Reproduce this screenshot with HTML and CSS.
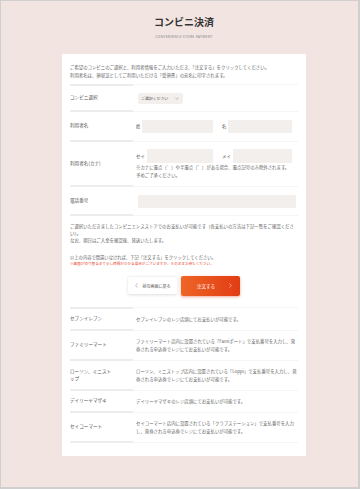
FILE: index.html
```html
<!DOCTYPE html>
<html lang="ja">
<head>
    <meta charset="UTF-8">
    <meta name="viewport" content="width=device-width, initial-scale=1.0">
    <title>コンビニ決済</title>
    <link rel="stylesheet" href="styles.css">
</head>
<body>

<div class="page">
    <div class="page-head">
        <h1 class="page-title">コンビニ決済</h1>
        <p class="page-sub">CONVENIENCE STORE PAYMENT</p>
    </div>

    <div class="card">
        <p class="intro">ご希望のコンビニのご選択と、利用者情報をご入力いただき、「注文する」をクリックしてください。<br>利用者名は、領収証としてご利用いただける「受領書」の宛名に印字されます。</p>

        <table class="form-table">
            <tr class="row-select">
                <th>コンビニ選択</th>
                <td>
                    <div class="select">ご選択ください
                        <svg class="select-chev" viewBox="0 0 4 3" width="4" height="3"><polyline points="0.4,0.6 2,2.3 3.6,0.6" fill="none" stroke="#888" stroke-width="0.5"/></svg>
                    </div>
                </td>
            </tr>
            <tr>
                <th>利用者名</th>
                <td>
                    <div class="name-pair">
                        <label class="name-field"><span>姓</span><input type="text"></label>
                        <label class="name-field"><span>名</span><input type="text"></label>
                    </div>
                </td>
            </tr>
            <tr class="row-kana">
                <th>利用者名(カナ)</th>
                <td>
                    <div class="name-pair">
                        <label class="name-field"><span>セイ</span><input type="text" class="kana"></label>
                        <label class="name-field"><span>メイ</span><input type="text" class="kana"></label>
                    </div>
                    <p class="note">※カナに濁点（゛）や半濁点（゜）がある場合、濁点記号のみ除外されます。予めご了承ください。</p>
                </td>
            </tr>
            <tr class="row-tel">
                <th>電話番号</th>
                <td><input type="text" class="tel"></td>
            </tr>
        </table>

        <p class="info">ご選択いただきましたコンビニエンスストアでのお支払いが可能です（各支払いの方法は下記一覧をご確認ください）。<br>なお、期日はご入金を確認後、発送いたします。</p>

        <p class="confirm">以上の内容で間違いなければ、下記「注文する」をクリックしてください。</p>
        <p class="warn">※画面が切り替るまで少し時間がかかる場合がございますが、そのままお待ちください。</p>

        <div class="actions">
            <a href="#" class="back-btn">
                <svg viewBox="0 0 3 5" width="3" height="5"><polyline points="2.5,0.5 0.7,2.5 2.5,4.5" fill="none" stroke="#777" stroke-width="0.5"/></svg>
                <span>前の画面に戻る</span>
            </a>
            <a href="#" class="order-btn">
                <span>注文する</span>
                <svg viewBox="0 0 3 5" width="3" height="5"><polyline points="0.5,0.5 2.3,2.5 0.5,4.5" fill="none" stroke="#fff" stroke-width="0.5"/></svg>
            </a>
        </div>

        <table class="pay-table">
            <tr>
                <th>セブンイレブン</th>
                <td>セブンイレブンのレジ店頭にてお支払いが可能です。</td>
            </tr>
            <tr>
                <th>ファミリーマート</th>
                <td>ファミリーマート店内に設置されている「Famiポート」で支払番号を入力し、発券される申込券でレジにてお支払いが可能です。</td>
            </tr>
            <tr>
                <th>ローソン、ミニストップ</th>
                <td>ローソン、ミニストップ店内に設置されている「Loppi」で支払番号を入力し、発券される申込券でレジにてお支払いが可能です。</td>
            </tr>
            <tr>
                <th>デイリーヤマザキ</th>
                <td>デイリーヤマザキのレジ店頭にてお支払いが可能です。</td>
            </tr>
            <tr>
                <th>セイコーマート</th>
                <td>セイコーマート店内に設置されている「クラブステーション」で支払番号を入力し、発券される申込券でレジにてお支払いが可能です。</td>
            </tr>
        </table>
    </div>
</div>

</body>
</html>
```

FILE: styles.css
```css
/* Basic reset */
* {
    margin: 0;
    padding: 0;
    box-sizing: border-box;
}

html, body {
    height: 100%;
}

body {
    font-family: "Noto Sans CJK JP", "Noto Sans", sans-serif;
    background-color: #f2e4e0;
    color: #666;
    border: 1px solid #cfcfcf;
    border-right-width: 2px;
    border-bottom-width: 2px;
    overflow: hidden;
}

/* Page header */
.page {
    width: 244px;
    margin-left: 61px;
}

.page-head {
    height: 53px;
    padding-top: 15px;
    text-align: center;
}

.page-title {
    font-size: 10px;
    line-height: 12px;
    font-weight: bold;
    color: #333;
}

.page-sub {
    margin-top: 5.5px;
    font-family: "Noto Sans", sans-serif;
    font-size: 3.4px;
    line-height: 5px;
    letter-spacing: 0.08em;
    color: #8a8a8a;
}

/* White card */
.card {
    background-color: #fff;
    padding: 9px 8px 13px;
}

.intro {
    font-size: 4.4px;
    line-height: 8.4px;
    margin-bottom: 4px;
}

/* Form table */
.form-table,
.pay-table {
    width: 100%;
    border-collapse: separate;
    border-spacing: 0;
}

.form-table th,
.pay-table th {
    width: 63px;
    padding-right: 18px;
    text-align: left;
    font-weight: normal;
    font-size: 4.6px;
    line-height: 7px;
    color: #555;
    border-bottom: 2px solid #ececec;
    vertical-align: middle;
}

.form-table td {
    padding: 8px 0 8px 3px;
    font-size: 4.4px;
    line-height: 8px;
    border-bottom: 1px solid #f5f5f5;
    vertical-align: middle;
}

.form-table tr:first-child th,
.pay-table tr:first-child th {
    border-top: 2px solid #ececec;
}

.form-table tr:first-child td,
.pay-table tr:first-child td {
    border-top: 1px solid #f5f5f5;
}

.form-table .row-select td,
.form-table .row-tel td {
    padding-bottom: 7px;
}

.form-table .row-kana td {
    padding-top: 7px;
    padding-bottom: 7px;
}

/* Select box */
.select {
    display: flex;
    align-items: center;
    justify-content: space-between;
    width: 45px;
    height: 11px;
    margin-left: 2px;
    padding: 0 4px 0 3px;
    background-color: #f3efed;
    border-radius: 2px;
    font-size: 3.9px;
    color: #555;
}

/* Name inputs */
.name-pair {
    display: flex;
    width: 156px;
}

.name-field {
    display: flex;
    align-items: center;
    gap: 2px;
    width: 78px;
}

.name-field:first-child {
    padding-right: 1px;
}

.name-field + .name-field {
    padding-left: 8px;
}

.name-field span {
    color: #555;
}

input {
    display: block;
    flex: 1;
    min-width: 0;
    height: 13px;
    border: none;
    border-radius: 1px;
    background-color: #f2efed;
    outline: none;
}

input.kana {
    height: 14px;
}

input.tel {
    width: 158px;
    margin-left: 2px;
}

.note {
    max-width: 156px;
    font-size: 4.4px;
    line-height: 8px;
}

/* Info texts */
.info {
    margin-top: 7px;
    font-size: 4.4px;
    line-height: 7px;
}

.confirm {
    margin-top: 10.5px;
    font-size: 4.3px;
    line-height: 7px;
}

.warn {
    font-size: 3.6px;
    line-height: 6px;
    color: #e9452b;
}

/* Buttons */
.actions {
    display: flex;
    justify-content: center;
    align-items: center;
    gap: 4px;
    margin-top: 8.5px;
}

.back-btn {
    display: flex;
    align-items: center;
    justify-content: center;
    gap: 5px;
    width: 49px;
    height: 17px;
    background-color: #fff;
    border-radius: 2px;
    box-shadow: 0 0.5px 3px rgba(0, 0, 0, 0.14);
    color: #555;
    font-size: 4px;
    text-decoration: none;
}

.order-btn {
    display: flex;
    align-items: center;
    justify-content: space-between;
    width: 59px;
    height: 20px;
    padding: 0 8px 0 16px;
    background: linear-gradient(90deg, #ee6526, #e23c14);
    border-radius: 2px;
    box-shadow: 0 1px 3px rgba(210, 70, 30, 0.45);
    color: #fff;
    font-size: 4.5px;
    text-decoration: none;
}

/* Payment methods */
.pay-table {
    margin-top: 11px;
}

.pay-table th {
    padding-top: 6.5px;
    padding-bottom: 6.5px;
}

.pay-table td {
    padding: 6.5px 0 6.5px 3px;
    font-size: 4.4px;
    line-height: 8px;
    border-bottom: 1px solid #f5f5f5;
    vertical-align: middle;
}
```
